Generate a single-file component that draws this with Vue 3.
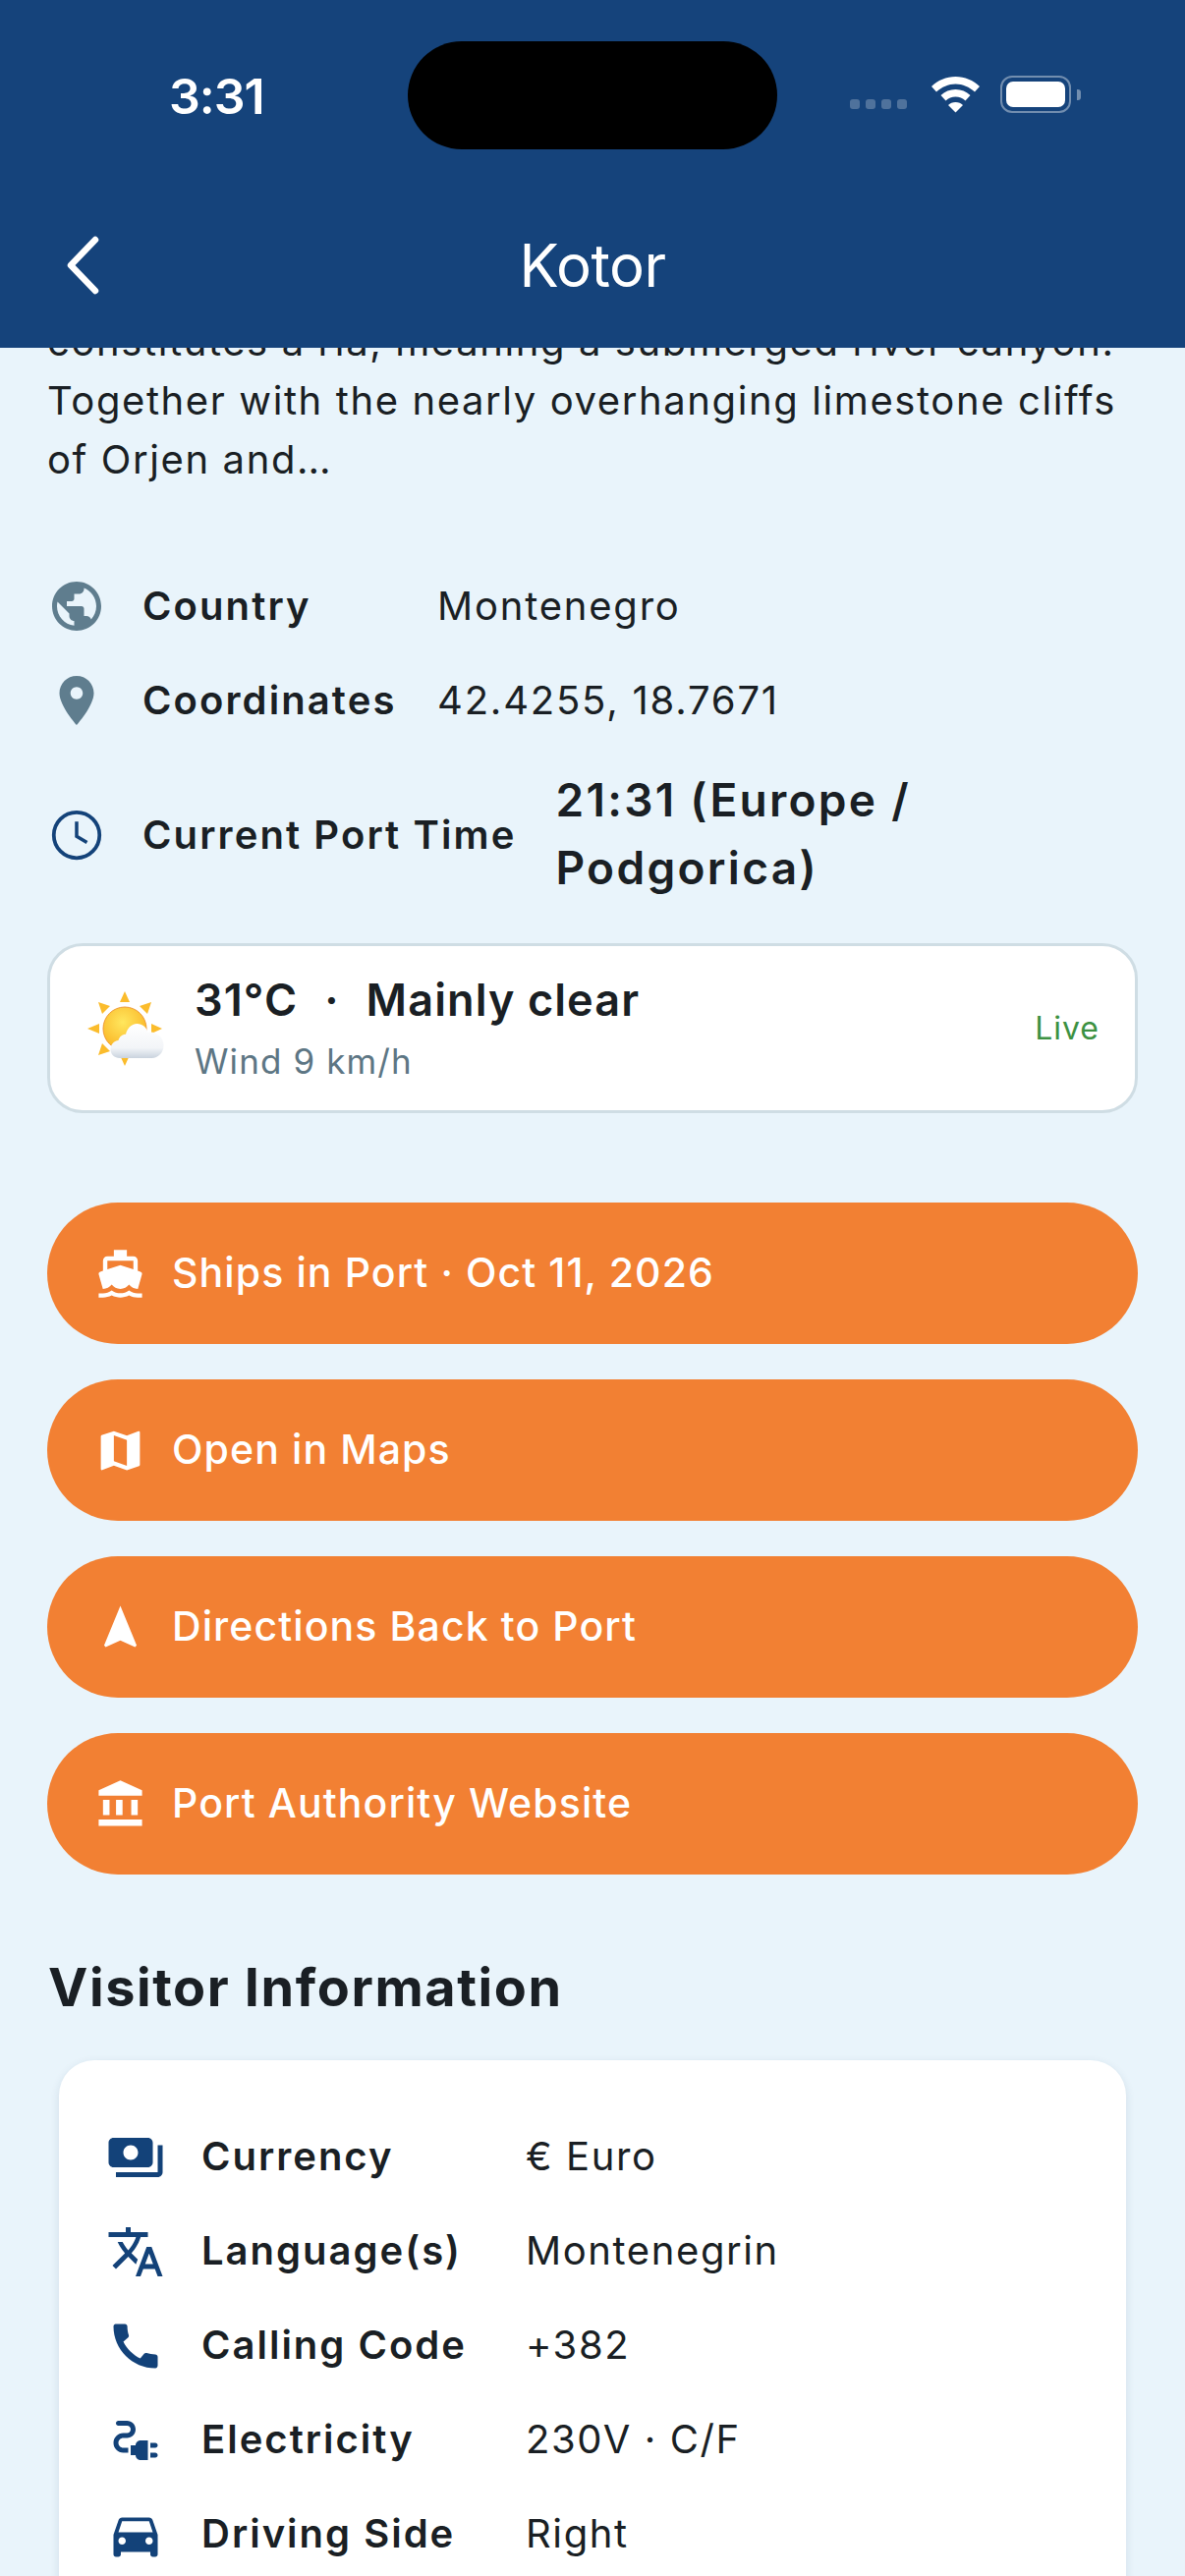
<script setup>
const facts = [
  { label: 'Country', value: 'Montenegro', color: '#5f7d8e', d: 'M12 2C6.48 2 2 6.48 2 12s4.48 10 10 10 10-4.48 10-10S17.52 2 12 2zm-1 17.93c-3.95-.49-7-3.85-7-7.93 0-.62.08-1.21.21-1.79L9 15v1c0 1.1.9 2 2 2v1.93zm6.9-2.54c-.26-.81-1-1.39-1.9-1.39h-1v-3c0-.55-.45-1-1-1H8v-2h2c.55 0 1-.45 1-1V7h2c1.1 0 2-.9 2-2v-.41c2.93 1.19 5 4.06 5 7.41 0 2.08-.8 3.97-2.1 5.39z' },
  { label: 'Coordinates', value: '42.4255, 18.7671', color: '#5f7d8e', d: 'M12 2C8.13 2 5 5.13 5 9c0 5.25 7 13 7 13s7-7.75 7-13c0-3.87-3.13-7-7-7zm0 9.5c-1.38 0-2.5-1.12-2.5-2.5s1.12-2.5 2.5-2.5 2.5 1.12 2.5 2.5-1.12 2.5-2.5 2.5z' }
]

const buttons = [
  { text: 'Ships in Port · Oct 11, 2026', d: 'M20 21c-1.39 0-2.78-.47-4-1.32-2.44 1.71-5.56 1.71-8 0C6.78 20.53 5.39 21 4 21H2v2h2c1.38 0 2.74-.35 4-.99 2.52 1.29 5.48 1.29 8 0 1.26.65 2.62.99 4 .99h2v-2h-2zM3.95 19H4c1.6 0 3.02-.88 4-2 .98 1.12 2.4 2 4 2s3.02-.88 4-2c.98 1.12 2.4 2 4 2h.05l1.89-6.68c.08-.26.06-.54-.06-.78s-.34-.42-.6-.5L20 10.62V6c0-1.1-.9-2-2-2h-3V1H9v3H6c-1.1 0-2 .9-2 2v4.62l-1.29.42c-.26.08-.48.26-.6.5s-.15.52-.06.78L3.95 19zM6 6h12v3.97L12 8 6 9.97V6z' },
  { text: 'Open in Maps', d: 'M20.5 3l-.16.03L15 5.1 9 3 3.36 4.9c-.21.07-.36.25-.36.48V20.5c0 .28.22.5.5.5l.16-.03L9 18.9l6 2.1 5.64-1.9c.21-.07.36-.25.36-.48V3.5c0-.28-.22-.5-.5-.5zM15 19l-6-2.11V5l6 2.11V19z' },
  { text: 'Directions Back to Port', d: 'M12 2L4.5 20.29l.71.71L12 18l6.79 3 .71-.71z' },
  { text: 'Port Authority Website', d: 'M4 10v7h3v-7H4zm6 0v7h3v-7h-3zM2 22h20v-3H2v3zm15-12v7h3v-7h-3zM12 1L2 5.500V8h20V5.500L12 1z' }
]

const visitor = [
  { label: 'Currency', value: '€ Euro', d: 'M19 14V6c0-1.1-.9-2-2-2H3c-1.1 0-2 .9-2 2v8c0 1.1.9 2 2 2h14c1.1 0 2-.9 2-2zm-9-1c-1.66 0-3-1.34-3-3s1.34-3 3-3 3 1.34 3 3-1.34 3-3 3zm13-6v11c0 1.1-.9 2-2 2H4v-2h17V7h2z' },
  { label: 'Language(s)', value: 'Montenegrin', d: 'M12.87 15.07l-2.54-2.51.03-.03c1.74-1.94 2.98-4.17 3.71-6.53H17V4h-7V2H8v2H1v1.99h11.17C11.5 7.92 10.44 9.75 9 11.35 8.07 10.32 7.3 9.19 6.69 8h-2c.73 1.63 1.73 3.17 2.98 4.56l-5.09 5.02L4 19l5-5 3.11 3.11.76-2.04zM18.5 10h-2L12 22h2l1.12-3h4.75L21 22h2l-4.5-12zm-2.62 7l1.62-4.33L19.12 17h-3.24z' },
  { label: 'Calling Code', value: '+382', d: 'M20.01 15.38c-1.23 0-2.42-.2-3.53-.56-.35-.12-.74-.03-1.01.24l-1.57 1.97c-2.83-1.35-5.48-3.9-6.89-6.83l1.95-1.66c.27-.28.35-.67.24-1.02-.37-1.11-.56-2.3-.56-3.53 0-.54-.45-.99-.99-.99H4.19C3.65 3 3 3.24 3 3.99 3 13.28 10.73 21 20.01 21c.71 0 .99-.63.99-1.18v-3.45c0-.54-.45-.99-.99-.99z' },
  { label: 'Electricity', value: '230V · C/F', d: 'M21 14c0-.55-.45-1-1-1h-2v2h2c.55 0 1-.45 1-1zm-1 3h-2v2h2c.55 0 1-.45 1-1s-.45-1-1-1zm-8-3h-2v4h2c0 1.1.9 2 2 2h3v-8h-3c-1.1 0-2 .9-2 2zM5 13c0-1.1.9-2 2-2h1.5c1.93 0 3.5-1.57 3.5-3.5S10.43 4 8.5 4H5c-.55 0-1 .45-1 1s.45 1 1 1h3.5c.83 0 1.5.67 1.5 1.5S9.33 9 8.5 9H7c-2.21 0-4 1.79-4 4s1.79 4 4 4h2v-2H7c-1.1 0-2-.9-2-2z' },
  { label: 'Driving Side', value: 'Right', d: 'M18.92 6.01C18.72 5.42 18.16 5 17.5 5h-11c-.66 0-1.21.42-1.42 1.01L3 12v8c0 .55.45 1 1 1h1c.55 0 1-.45 1-1v-1h12v1c0 .55.45 1 1 1h1c.55 0 1-.45 1-1v-8l-2.08-5.99zM6.5 16c-.83 0-1.5-.67-1.5-1.5S5.67 13 6.5 13s1.5.67 1.5 1.5S7.33 16 6.5 16zm11 0c-.83 0-1.5-.67-1.5-1.5s.67-1.5 1.5-1.5 1.5.67 1.5 1.5-.67 1.5-1.5 1.5zM5 11l1.5-4.5h11L19 11H5z' }
]
</script>

<template>
  <div class="screen">
    <header class="header">
      <div class="status">
        <span class="clock">3:31</span>
        <div class="island"></div>
        <div class="status-icons">
          <div class="signal"><i></i><i></i><i></i><i></i></div>
          <svg class="wifi" width="55" height="38" viewBox="0 0 52 38">
            <path fill="#fff" d="M26 1C16.500 1 8 4.800 1.500 11l5 5.500C12 11.500 18.700 8.500 26 8.500s14 3 19.500 8l5-5.500C44 4.800 35.500 1 26 1z" />
            <path fill="#fff" d="M26 14c-5.800 0-11 2.300-15 6l5 5.500c2.700-2.500 6.200-4 10-4s7.300 1.500 10 4l5-5.500c-4-3.700-9.200-6-15-6z" />
            <path fill="#fff" d="M26 27c-3 0-5.600 1.100-7.500 3L26 37.500 33.500 30c-1.900-1.900-4.500-3-7.500-3z" />
          </svg>
          <div class="battery"><div class="battery-fill"></div></div>
          <div class="battery-cap"></div>
        </div>
      </div>
      <div class="nav">
        <svg class="back" width="36" height="60" viewBox="0 0 36 60">
          <path d="M31 4 6 30l25 26" fill="none" stroke="#fff" stroke-width="6.500" stroke-linecap="round" stroke-linejoin="round" />
        </svg>
        <h1 class="title">Kotor</h1>
      </div>
    </header>

    <main class="scroll">
      <p class="intro">
        constitutes a ria, meaning a submerged river canyon.<br />
        Together with the nearly overhanging limestone cliffs<br />
        of Orjen and…
      </p>

      <div class="facts">
        <div v-for="f in facts" :key="f.label" class="fact">
          <svg class="fact-icon" viewBox="0 0 24 24"><path :fill="f.color" :d="f.d" /></svg>
          <span class="fact-label">{{ f.label }}</span>
          <span class="fact-value">{{ f.value }}</span>
        </div>
        <div class="fact">
          <svg class="fact-icon" viewBox="0 0 24 24">
            <circle cx="12" cy="12" r="9.300" fill="none" stroke="#134279" stroke-width="1.500" />
            <path d="M12 6.500v6l4.200 2.500" fill="none" stroke="#134279" stroke-width="1.400" />
          </svg>
          <span class="fact-label">Current Port Time</span>
          <span class="fact-time">21:31 (Europe /<br />Podgorica)</span>
        </div>
      </div>

      <div class="weather">
        <svg class="weather-icon" width="78" height="76" viewBox="0 0 78 76">
          <defs>
            <radialGradient id="sun" cx="0.45" cy="0.35" r="0.75">
              <stop offset="0" stop-color="#ffe75e" />
              <stop offset="1" stop-color="#f9ad1c" />
            </radialGradient>
            <linearGradient id="cloud" x1="0" y1="0" x2="0" y2="1">
              <stop offset="0" stop-color="#ffffff" />
              <stop offset="0.7" stop-color="#f3f5f8" />
              <stop offset="1" stop-color="#c9d3de" />
            </linearGradient>
          </defs>
          <g fill="#fbbc2c">
            <path d="M38 0l5 11H33z" />
            <path d="M38 76l-5-11h10z" />
            <path d="M0 38l12-5v10z" />
            <path d="M65 33l11 5-11 5z" />
            <path d="M11 11l12 4-8 8z" />
            <path d="M65 11l-12 4 8 8z" />
            <path d="M11 65l4-12 8 8z" />
          </g>
          <circle cx="38" cy="38" r="22" fill="url(#sun)" stroke="#ef9a34" stroke-width="1" />
          <path d="M33 68c-5.500 0-9.500-3.800-9.500-9 0-4.800 3.400-8.500 8-9 1-3.800 4-6.200 7.500-6.200 1.200-5.500 5.500-10.800 11.500-10.800 5.500 0 9.700 3.600 11 8.800 1-.3 1.800-.4 2.800-.4 6.500 0 13.200 5.600 13.200 13.600 0 7.500-5.600 13-12 13z" fill="url(#cloud)" />
        </svg>
        <div class="weather-text">
          <div class="weather-main"><span>31°C</span><span class="dot">·</span><span>Mainly clear</span></div>
          <div class="weather-sub">Wind 9 km/h</div>
        </div>
        <span class="live">Live</span>
      </div>

      <div class="actions">
        <button v-for="b in buttons" :key="b.text" class="action">
          <svg class="action-icon" viewBox="0 0 24 24"><path fill="#fff" :d="b.d" /></svg>
          <span class="action-text">{{ b.text }}</span>
        </button>
      </div>

      <h2 class="section-title">Visitor Information</h2>

      <section class="visitor-card">
        <div v-for="v in visitor" :key="v.label" class="visitor-row">
          <svg class="visitor-icon" viewBox="0 0 24 24"><path fill="#134279" :d="v.d" /></svg>
          <span class="visitor-label">{{ v.label }}</span>
          <span class="visitor-value">{{ v.value }}</span>
        </div>
      </section>
    </main>
  </div>
</template>

<style>
html, body {
  margin: 0;
  background: #e9f4fb;
}
</style>

<style scoped>
.screen {
  width: 1206px;
  height: 2622px;
  display: flex;
  flex-direction: column;
  overflow: hidden;
  background: #e9f4fb;
  color: #1a1f24;
  font-family: Inter, "Liberation Sans", sans-serif;
}
.header {
  height: 354px;
  flex-shrink: 0;
  background: #15437b;
  color: #fff;
}
.status {
  position: relative;
  height: 194px;
  display: flex;
  justify-content: space-between;
  padding: 0 106px 0 172px;
}
.clock {
  margin-top: 68px;
  font-size: 50px;
  line-height: 60px;
  font-weight: 600;
  letter-spacing: -1px;
}
.island {
  position: absolute;
  left: 415px;
  top: 42px;
  width: 376px;
  height: 110px;
  border-radius: 55px;
  background: #000;
}
.status-icons {
  display: flex;
  align-items: center;
  height: 40px;
  margin-top: 76px;
}
.signal {
  display: flex;
  gap: 6px;
  margin: 20px 22px 0 0;
}
.signal i {
  width: 10px;
  height: 10px;
  border-radius: 3px;
  background: rgba(255, 255, 255, 0.25);
}
.wifi {
  margin-right: 18px;
}
.battery {
  width: 72px;
  height: 38px;
  box-sizing: border-box;
  padding: 4px;
  border: 2px solid rgba(255, 255, 255, 0.4);
  border-radius: 12px;
}
.battery-fill {
  height: 100%;
  border-radius: 7px;
  background: #fff;
}
.battery-cap {
  width: 4px;
  height: 11px;
  margin-left: 6px;
  border-radius: 0 3px 3px 0;
  background: rgba(255, 255, 255, 0.4);
}
.nav {
  position: relative;
  height: 80px;
  display: flex;
  align-items: center;
  justify-content: center;
  margin-top: 36px;
}
.back {
  position: absolute;
  left: 66px;
  top: 10px;
}
.title {
  margin: 0;
  font-size: 60px;
  line-height: 80px;
  font-weight: 400;
  letter-spacing: -0.5px;
}
.scroll {
  flex: 1;
  min-height: 0;
  overflow: hidden;
  padding: 0 48px;
}
.intro {
  margin: -36px 0 0;
  font-size: 40px;
  line-height: 60px;
  letter-spacing: 1.6px;
  white-space: nowrap;
}
.facts {
  margin-top: 90px;
  display: flex;
  flex-direction: column;
  gap: 36px;
}
.fact {
  display: flex;
  align-items: center;
  gap: 40px;
  min-height: 60px;
}
.fact-icon {
  width: 60px;
  height: 60px;
  flex-shrink: 0;
  margin-top: -2px;
  margin-right: -3px;
}
.fact-label {
  min-width: 260px;
  padding-bottom: 3px;
  font-size: 40px;
  font-weight: 600;
  letter-spacing: 2.1px;
}
.fact-value {
  padding-bottom: 3px;
  font-size: 40px;
  letter-spacing: 1.8px;
}
.fact-time {
  padding-bottom: 3px;
  font-size: 46px;
  line-height: 69px;
  font-weight: 600;
  letter-spacing: 2.3px;
}
.weather {
  margin-top: 39px;
  height: 173px;
  box-sizing: border-box;
  display: flex;
  align-items: center;
  padding: 0 36px 0 38px;
  background: #fff;
  border: 3px solid #cfdde4;
  border-radius: 36px;
}
.weather-icon {
  flex-shrink: 0;
  margin-right: 31px;
}
.weather-text {
  flex: 1;
}
.weather-main {
  display: flex;
  font-size: 45px;
  line-height: 56px;
  font-weight: 600;
  letter-spacing: 1.1px;
}
.dot {
  margin: 0 27px;
}
.weather-sub {
  margin-top: 11px;
  font-size: 35px;
  line-height: 46px;
  color: #5d7684;
  letter-spacing: 1.1px;
}
.live {
  font-size: 32px;
  color: #3c9142;
  letter-spacing: 1px;
}
.actions {
  margin-top: 91px;
  display: flex;
  flex-direction: column;
  gap: 36px;
}
.action {
  height: 144px;
  display: flex;
  align-items: center;
  gap: 26px;
  padding: 0 48px;
  border: none;
  border-radius: 72px;
  background: #f28033;
  color: #fff;
  font-family: inherit;
  font-size: 41px;
  font-weight: 500;
  letter-spacing: 1.1px;
}
.action-icon {
  width: 53px;
  height: 53px;
  flex-shrink: 0;
}
.action-text {
  padding-bottom: 3px;
}
.section-title {
  margin: 82px 0 0 1px;
  font-size: 54px;
  line-height: 66px;
  font-weight: 700;
  letter-spacing: 1.6px;
}
.visitor-card {
  margin: 41px 12px 0;
  padding: 69px 48px 48px;
  display: flex;
  flex-direction: column;
  gap: 36px;
  background: #fff;
  border-radius: 36px;
  box-shadow: 0 3px 10px rgba(30, 60, 90, 0.12);
}
.visitor-row {
  display: flex;
  align-items: center;
  height: 60px;
}
.visitor-icon {
  width: 60px;
  height: 60px;
  flex-shrink: 0;
  margin-right: 37px;
}
.visitor-label {
  width: 330px;
  flex-shrink: 0;
  padding-bottom: 3px;
  font-size: 40px;
  font-weight: 600;
  letter-spacing: 2px;
}
.visitor-value {
  padding-bottom: 3px;
  font-size: 40px;
  letter-spacing: 1.6px;
}
</style>
